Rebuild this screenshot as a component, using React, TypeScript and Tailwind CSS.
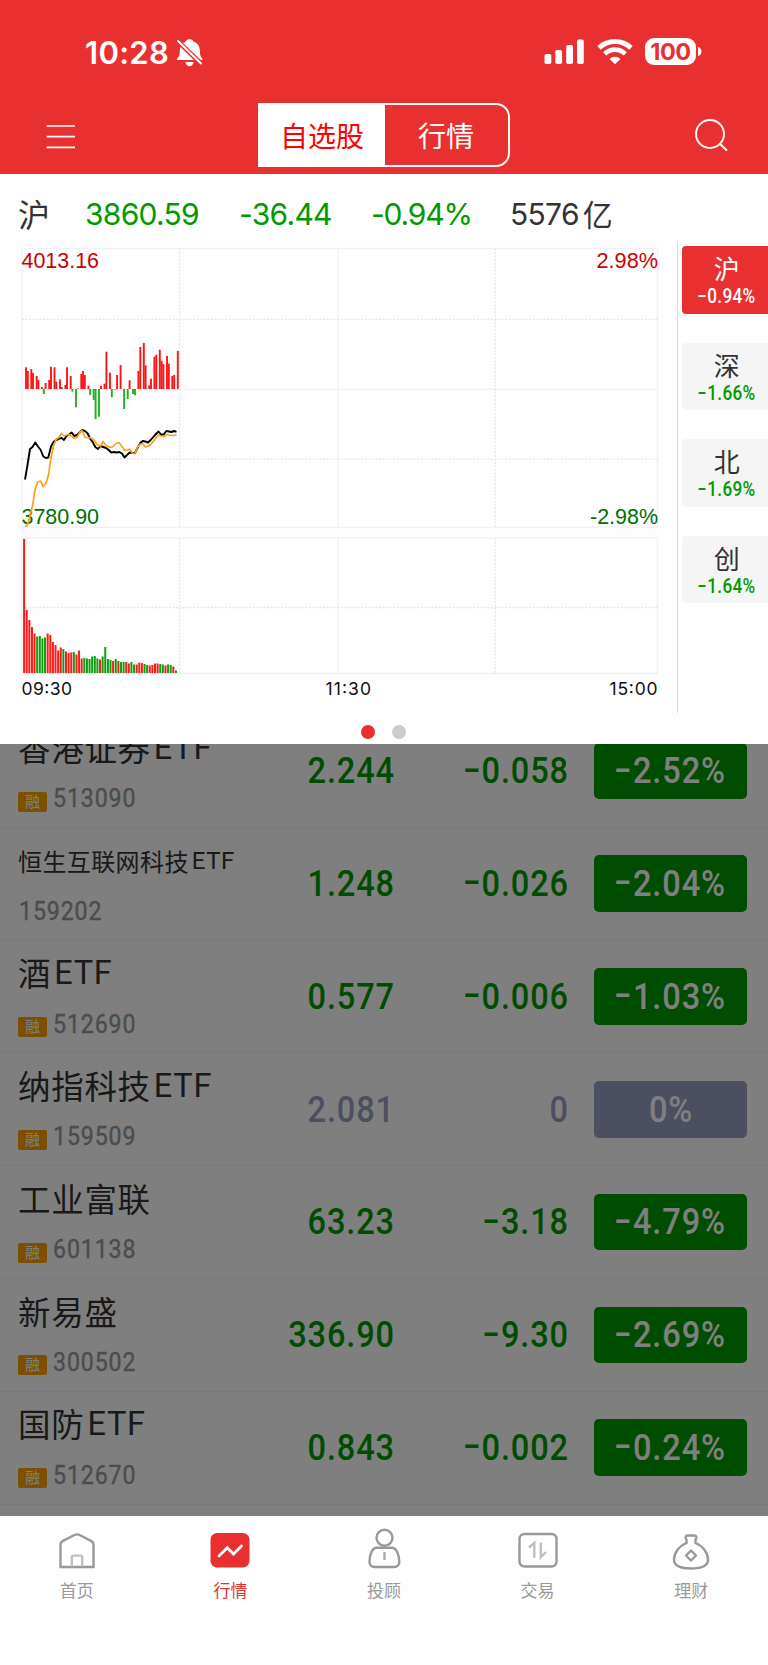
import { ReactNode, useState } from 'react';

interface Stock {
  name: string;
  code: string;
  margin: boolean;
  price: string;
  change: string;
  percent: string;
}

const stocks: Stock[] = [
  { name: '香港证券ETF', code: '513090', margin: true, price: '2.244', change: '-0.058', percent: '-2.52%' },
  { name: '恒生互联网科技ETF', code: '159202', margin: false, price: '1.248', change: '-0.026', percent: '-2.04%' },
  { name: '酒ETF', code: '512690', margin: true, price: '0.577', change: '-0.006', percent: '-1.03%' },
  { name: '纳指科技ETF', code: '159509', margin: true, price: '2.081', change: '0', percent: '0%' },
  { name: '工业富联', code: '601138', margin: true, price: '63.23', change: '-3.18', percent: '-4.79%' },
  { name: '新易盛', code: '300502', margin: true, price: '336.90', change: '-9.30', percent: '-2.69%' },
  { name: '国防ETF', code: '512670', margin: true, price: '0.843', change: '-0.002', percent: '-0.24%' },
];

const indices = [
  { name: '沪', percent: '-0.94%' },
  { name: '深', percent: '-1.66%' },
  { name: '北', percent: '-1.69%' },
  { name: '创', percent: '-1.64%' },
];

// [x, top], below 389 the bar hangs down in green
const momentum = [
  [26, 367.3], [27.8, 371], [31.3, 369], [33, 373], [36.7, 376], [38.4, 380], [42, 387], [43.8, 394],
  [45.6, 383], [49.2, 380], [51, 366.7], [54.5, 367.3], [56.3, 381.7], [60, 379.3], [61.7, 387], [65.4, 385],
  [67, 367.3], [70.7, 376], [72.4, 391.7], [76, 407.3], [77.8, 388.4], [81.3, 374], [83, 371], [84.8, 375],
  [88.4, 385.7], [90.2, 395], [93.7, 400], [95.6, 419], [99, 416.7], [101, 385.7], [104.5, 383.7],
  [106.4, 351.7], [110, 372.7], [111.8, 397.3], [115.3, 389.7], [117.1, 375], [120.6, 365], [124.1, 409],
  [127.7, 399], [129.6, 380.3], [133, 394], [135, 395.3], [138.4, 371], [140.3, 347], [143.8, 343],
  [145.6, 365.3], [149.2, 385.3], [151, 378.7], [154.4, 356.7], [156.3, 354.7], [159.8, 349.7],
  [161.6, 360.7], [163.4, 364], [167, 356], [168.8, 363.7], [172.3, 376], [174.2, 375], [177.8, 351],
];

// volume per minute: colour + height
const volume =
  'r134 r63 r53 r46 r39.5 g36.5 g37 g34.5 g35.5 r39.5 r38 r31 r28 r22.5 r25.5 g24 r21.5 r20 r20.5 g21 r18.5 r22.5 r14.5 g15 g14.5 g14 g16.5 g17 g14.5 r13.5 g16.5 g26 g14 g13 r12 g14 r12 g11 g11 r11 r9.5 g11 g8.5 r8.5 r10.5 r10 g9 g8 r7.5 r8 r9.5 r9.5 g9 g8.5 r7.5 g8.5 g8 r6.5 g2.5'.split(' ');

const priceLine =
  '25,479.5 27.5,465 30,449 32.5,447 35.3,442.5 38,446.5 40.7,450 43.3,456.5 46,458 48.3,457.5 51,446.5 53.5,442 56,440 58.7,439 61.3,437.8 64,440 66.5,436 69,434.5 71.7,432.5 74.3,436 77,435 79.5,432.5 82,430 85,431 87.7,433.5 90.3,439 92.7,442 95.3,447 98,449 100.5,446 103.3,447 106,448 108.7,450 111.3,452.5 114,452 116.7,452.5 119.3,452 122,453.5 124.5,457.5 127,455 129.7,452.5 132.3,453 135,453 137.7,447.5 140.3,443 142.7,441 145.3,441.5 148,442.5 150.7,440 153.3,437 156,434 158.5,431.5 161,434.5 163.7,434.5 166.3,431 169,431.5 171.5,432 174,431 176.5,431.8';

const avgLine =
  '25,526.5 27.5,525 30,516 32.7,505 35,490 37.7,482 40.5,481 43,486.5 46,483 48.5,475 51,458 53.5,446 56,439.5 58.7,437.5 61.3,433.5 64,436 66.5,435 69,434.5 72,436.5 74.7,438.5 77.3,437 80,432 82,430.5 85,437.5 88,437.5 91,438 94,440 97,444.5 100.5,446 103,441.5 106,445.5 110,447.5 113,446.5 116,443.5 119,442.5 122,446.5 124.7,450.5 127.5,450 129.7,449 132.3,453 134.7,454 137.7,447 140.3,444 143,444 145.5,447 148.5,446 151,444 154,440.5 156.5,437 158.5,435 161,436 164,436.5 166.5,434.5 169,435 173,435.5 176.5,435';

function Num({ value, className = '' }: { value: string; className?: string }) {
  const negative = value.startsWith('-');
  return (
    <span className={`inline-block whitespace-nowrap font-['Roboto'] ${className}`}>
      {negative && <span className="relative -top-[0.04em] mr-[0.04em] inline-block w-[0.5em] scale-x-[1.55] text-center">-</span>}
      {negative ? value.slice(1) : value}
    </span>
  );
}

function StatusBar() {
  return (
    <div className="flex h-[103px] items-start text-white">
      <div className="ml-[85px] mt-[33px] w-[91px] whitespace-nowrap font-['Inter'] text-[31px] font-semibold leading-[40px] tracking-[0.3px]">
        10:28
      </div>
      <svg className="mt-[38px]" width="28" height="30" viewBox="0 0 28 30" fill="none">
        <path
          d="M13.500 1.200c2 0 3.300.8 3.800 2.400 4.800 1.500 6.500 5.200 6.600 9.600 0 4.500 1 5.600 2.600 7.400v1.400H1v-1.400c1.500-1.800 2.800-3 2.800-7.400 0-4.400 1.700-8.100 6.200-9.600.5-1.600 1.500-2.400 3.500-2.400Z"
          fill="#fff"
        />
        <path d="M9.500 24h8c-.3 2.700-1.800 4.200-4 4.200s-3.700-1.500-4-4.200Z" fill="#fff" />
        <path d="M1 2.500 26 26.500" stroke="#e93030" strokeWidth="4.800" />
        <path d="M2 3 25 25.500" stroke="#fff" strokeWidth="2" strokeLinecap="round" />
      </svg>
      <svg className="ml-auto mt-[38px]" width="40" height="27" viewBox="0 0 40 27" fill="#fff">
        <rect x="0.500" y="16" width="6.800" height="10" rx="1.800" />
        <rect x="11.300" y="12" width="6.800" height="14" rx="1.800" />
        <rect x="22.200" y="7" width="6.800" height="19" rx="1.800" />
        <rect x="33" y="1.500" width="6.800" height="24.500" rx="1.800" />
      </svg>
      <svg className="ml-[13px] mt-[38px]" width="36" height="27" viewBox="0 0 36 27" fill="none" stroke="#fff">
        <path d="M2 9.800a23.500 23.500 0 0 1 32 0" strokeWidth="5" />
        <path d="M7.700 15.800a14.800 14.800 0 0 1 20.600 0" strokeWidth="4.600" />
        <path d="M12.500 21a8 8 0 0 1 11 0L18 26.200Z" fill="#fff" stroke="none" />
      </svg>
      <div className="ml-3 mt-[38px] flex h-[27px] w-[51px] items-center justify-center rounded-[9px] bg-white font-['Inter'] text-[23.5px] font-bold tracking-[-0.5px] text-[#e93030]">
        100
      </div>
      <svg className="ml-[2px] mr-[66px] mt-[47px]" width="4" height="9" viewBox="0 0 4 9">
        <path d="M0 0c2 .5 3.500 2.300 3.500 4.500S2 8.500 0 9Z" fill="#fff" />
      </svg>
    </div>
  );
}

function IndexChart() {
  return (
    <svg width="677" height="478" viewBox="0 241 677 478" className="block shrink-0">
      <g fill="none" stroke="#f1f1f3" strokeWidth="1.3">
        <path d="M22 248.500H657.500V527.500H22ZM22 538H657.500V673.500H22ZM22 389.300H657.500" />
        <path d="M338 248.500V527.500M338 538V673.500" />
        <path
          d="M22 319.300H658M22 459.200H658M22 607.500H658M179.600 248.500V527.500M179.600 538V673.500M495.300 248.500V527.500M495.300 538V673.500"
          stroke="#e6e6e6"
          strokeDasharray="2 1.500"
        />
      </g>
      {momentum.map(([x, y]) => (
        <rect
          key={x}
          x={x - 0.95}
          width="1.9"
          y={Math.min(y, 389)}
          height={Math.abs(389 - y)}
          fill={y < 389 ? '#ff1414' : '#20b020'}
        />
      ))}
      {volume.map((v, i) => (
        <rect
          key={i}
          x={23.1 + i * 2.618}
          width="2"
          y={673 - Number(v.slice(1))}
          height={v.slice(1)}
          fill={v[0] === 'r' ? '#ff1a1a' : '#0e9e0e'}
        />
      ))}
      <polyline points={priceLine} fill="none" stroke="#000" strokeWidth="1.900" strokeLinejoin="round" />
      <g className="font-['Liberation_Sans'] text-[21.5px]">
        <text x="21.500" y="268" fill="#cc0000" textLength="77.500" lengthAdjust="spacingAndGlyphs">4013.16</text>
        <text x="596.500" y="268" fill="#cc0000" textLength="61.500" lengthAdjust="spacingAndGlyphs">2.98%</text>
        <text x="21.500" y="523.500" fill="#006e00" textLength="77.500" lengthAdjust="spacingAndGlyphs">3780.90</text>
        <text x="590" y="523.500" fill="#006e00" textLength="68" lengthAdjust="spacingAndGlyphs">-2.98%</text>
      </g>
      <polyline points={avgLine} fill="none" stroke="#ff9f1a" strokeWidth="1.700" strokeLinejoin="round" />
      <g className="font-['Inter'] text-[17.5px]" fill="#111">
        <text x="21.500" y="695" textLength="50.500">09:30</text>
        <text x="325.500" y="695" textLength="45.500">11:30</text>
        <text x="609.500" y="695" textLength="48">15:00</text>
      </g>
    </svg>
  );
}

function StockRow({ stock }: { stock: Stock }) {
  const flat = stock.change === '0';
  const latin = stock.name.endsWith('ETF');
  const cjk = latin ? stock.name.slice(0, -3) : stock.name;
  const small = cjk.length > 5;
  return (
    <div className="flex h-[112.8px] items-center border-b border-[#f2f2f2]">
      <div className="flex h-full w-[250px] flex-col pl-[18px]">
        <div
          className={`flex h-[34px] items-center whitespace-nowrap text-[#333] ${
            small ? "mt-[16px] text-[24px] tracking-[0.4px]" : 'mt-[15px] text-[32.5px] tracking-[0.7px]'
          }`}
        >
          <span className="font-['Noto_Sans_CJK_SC']">{cjk}</span>
          {latin && (
            <span className={`ml-[3px] font-['Roboto'] ${small ? 'tracking-[0.5px]' : 'relative top-px tracking-[0.7px]'}`}>ETF</span>
          )}
        </div>
        <div className={`flex h-[24px] items-center ${small ? 'mt-[21.5px] pl-px' : 'mt-[22.5px]'}`}>
          {stock.margin && (
            <span className="relative top-[3px] mr-[5.5px] flex h-5 w-[29px] items-center justify-center rounded-[2px] bg-[#fa9e00] font-['Noto_Sans_CJK_SC'] text-[15px] leading-[18px] text-white">
              <span className="-mt-[2px]">融</span>
            </span>
          )}
          <Num
            value={stock.code}
            className="origin-left scale-x-[0.89] text-[26px] tracking-[1px] text-[#999] [-webkit-text-stroke:0.4px_#999]"
          />
        </div>
      </div>
      <Num
        value={stock.price}
        className={`w-[145px] origin-right scale-x-[0.88] text-right text-[37px] font-medium tracking-[1px] ${flat ? 'text-[#969fbe]' : 'text-[#009900]'}`}
      />
      <Num
        value={stock.change}
        className={`ml-[14px] w-[160px] origin-right scale-x-[0.88] text-right text-[37px] font-medium tracking-[1px] ${flat ? 'text-[#969fbe]' : 'text-[#009900]'}`}
      />
      <div
        className={`ml-[24.500px] flex h-[56.5px] w-[153.5px] items-center justify-center rounded-[5px] ${flat ? 'bg-[#969fbe]' : 'bg-[#009900]'}`}
      >
        <Num value={stock.percent} className="pl-[2px] scale-x-[0.88] text-[37px] font-medium tracking-[1px] text-white" />
      </div>
    </div>
  );
}

const tabs: { label: string; icon: ReactNode }[] = [
  {
    label: '首页',
    icon: (
      <>
        <path d="M3.500 40V17.500c0-1.500.8-2.700 2-3.400L17 8.200c1.900-1 4.100-1 6 0l11.500 5.900c1.200.7 2 1.900 2 3.400V40Z" />
        <path d="M14.800 39.500V30c0-.8.600-1.400 1.400-1.400h7.600c.8 0 1.400.6 1.400 1.400v9.500" stroke="#c0c0c0" />
      </>
    ),
  },
  {
    label: '行情',
    icon: (
      <>
        <rect x="0.500" y="6" width="39" height="34.500" rx="6.500" fill="#e93030" stroke="none" />
        <path d="m9 29 8.300-8.300 6.200 6.200 8-8" stroke="#fff" strokeWidth="2.800" strokeLinecap="round" />
      </>
    ),
  },
  {
    label: '投顾',
    icon: (
      <>
        <circle cx="20.500" cy="10.700" r="8" />
        <path d="M12.500 20.800h15.500c4 0 7.300 6.500 7.300 14 0 3.200-2.200 5.200-5 5.200H10.500c-2.800 0-5-2-5-5.200 0-7.500 3-14 7-14Z" />
        <path d="M20.500 25v8" stroke="#aaa" />
      </>
    ),
  },
  {
    label: '交易',
    icon: (
      <>
        <rect x="1.500" y="7" width="37" height="32.500" rx="5" />
        <path d="m11 20.500 5.300-4.700v15M22.800 15.500v14.800l5.200-5.300" stroke="#c0c0c0" />
      </>
    ),
  },
  {
    label: '理财',
    icon: (
      <>
        <path d="M15.500 16v-3.300c-1.800-2.200-.9-4.200 1.300-4.200h6.400c2.200 0 3.100 2 1.300 4.200V16c7.500 2.800 12.500 10.300 12.500 16.800 0 6-6.500 8.700-17 8.700s-17-2.700-17-8.700c0-6.500 5-14 12.500-16.800Z" />
        <path d="m20 23.500 5 5-5 5-5-5Z" strokeLinejoin="round" />
      </>
    ),
  },
];

export default function App() {
  const [index, setIndex] = useState(0);
  const [tab, setTab] = useState(1);

  return (
    <div className="flex h-[1665px] w-[768px] flex-col overflow-hidden bg-white font-['Noto_Sans_CJK_SC',sans-serif]">
      {/* header */}
      <header className="h-[174px] shrink-0 bg-[#e93030]">
        <StatusBar />
        <div className="flex items-center justify-between pl-[46px] pr-[40px]">
          <svg width="212" height="28" viewBox="0 0 212 28" stroke="#fff" strokeWidth="1.700">
            <path d="M.5 5H29M.5 15.700H29M.5 26.300H29" />
          </svg>
          <div className="flex h-[64px] w-[252px] overflow-hidden rounded-r-[14px] border-2 border-white text-[28px]">
            <button className="w-[125px] shrink-0 bg-white pr-px text-[#ff0000]">自选股</button>
            <button className="w-[123px] shrink-0 pr-px text-white">行情</button>
          </div>
          <div className="flex w-[218px] justify-end">
            <svg width="34" height="34" viewBox="0 0 34 34" fill="none" stroke="#fff" strokeWidth="1.900">
              <circle cx="16" cy="16" r="14" />
              <path d="m25.500 25.500 7.500 7" strokeWidth="2.200" />
            </svg>
          </div>
        </div>
      </header>

      {/* index panel */}
      <section className="h-[570px] shrink-0 bg-[#fefefe]">
        <div className="flex h-[67px] items-center pl-[18px] pt-[14px] font-['Inter'] text-[30px] text-[#009900]">
          <span className="relative -top-[1.5px] w-[67px] font-['Noto_Sans_CJK_SC'] text-[32px] text-[#333]">沪</span>
          <span className="w-[154px] tracking-[-0.7px]">3860.59</span>
          <span className="w-[132px] tracking-[-0.7px]">-36.44</span>
          <span className="w-[139px] tracking-[-1.2px]">-0.94%</span>
          <span className="flex items-center tracking-[-0.7px] text-[#333]">
            5576<span className="relative -top-px ml-[4px] font-['Noto_Sans_CJK_SC']">亿</span>
          </span>
        </div>
        <div className="flex h-[478px]">
          <IndexChart />
          <div className="flex h-[472px] flex-1 flex-col gap-[29px] border-l border-[#dadada] pl-[3.500px] pt-[5px]">
            {indices.map((item, i) => (
              <button
                key={item.name}
                onClick={() => setIndex(i)}
                className={`flex h-[67.5px] flex-col items-center rounded-l-[4px] pl-[4px] pt-[7px] ${
                  i === index ? 'bg-[#e93030] text-white' : 'bg-[#f5f5f5] text-[#333]'
                }`}
              >
                <span className="text-[26px] leading-[30px]">{item.name}</span>
                <Num
                  value={item.percent}
                  className={`mt-[2px] scale-x-[0.88] text-[19.5px] font-medium leading-[23px] tracking-[0.4px] ${
                    i === index ? 'text-white' : 'text-[#009900]'
                  }`}
                />
              </button>
            ))}
          </div>
        </div>
        <div className="flex h-[25px] items-center justify-center gap-[17px] pr-px">
          <span className="h-[14px] w-[14px] rounded-full bg-[#e93030]" />
          <span className="h-[14px] w-[14px] rounded-full bg-[#ccc]" />
        </div>
      </section>

      <main className="relative h-[772px] shrink-0 overflow-hidden bg-white">
        <div className="-mt-[29px]">
          {stocks.map((s) => (
            <StockRow key={s.code} stock={s} />
          ))}
        </div>
        <div className="absolute inset-0 bg-black/50" />
      </main>

      {/* bottom tabs */}
      <nav className="flex flex-1 bg-[#fefefe] pt-[11px]">
        {tabs.map((t, i) => (
          <button key={t.label} onClick={() => setTab(i)} className="flex flex-1 flex-col items-center">
            <svg width="40" height="46" viewBox="0 0 40 46" fill="none" stroke="#999" strokeWidth="2.400">
              {t.icon}
            </svg>
            <span className={`mt-[5px] text-[17px] leading-[24px] ${i === tab ? 'text-[#e93030]' : 'text-[#999]'}`}>
              {t.label}
            </span>
          </button>
        ))}
      </nav>
    </div>
  );
}
